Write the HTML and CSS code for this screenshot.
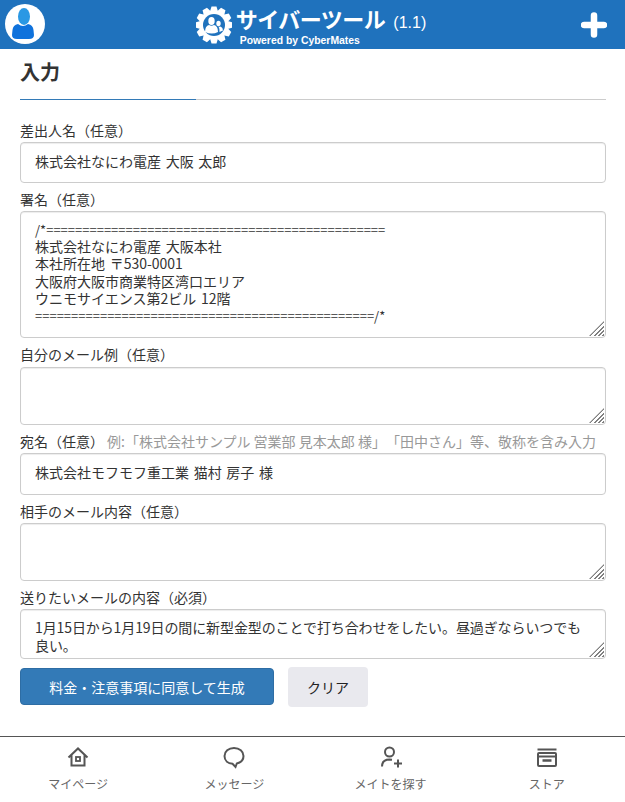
FILE: index.html
```html
<!DOCTYPE html>
<html lang="ja">
<head>
    <meta charset="UTF-8">
    <meta name="viewport" content="width=device-width, initial-scale=1.0">
    <title>サイバーツール</title>
    <link rel="stylesheet" href="styles.css">
</head>
<body>

<header class="top-bar">
    <div class="avatar">
        <svg width="40" height="40" viewBox="0 0 40 40">
            <circle cx="20" cy="20" r="20" fill="#fff"/>
            <ellipse cx="19" cy="12.500" rx="6" ry="8.500" fill="#2a98e4"/>
            <path d="M13 20 q-5 1-5.500 6 l-.5 5 q0 4 5 4 h12 q5 0 5-4 l-.5-5 q-.5-5-5.500-6 q-5 4-10 0z" fill="#0f72dc"/>
        </svg>
    </div>
    <div class="logo">
        <svg width="36" height="38" viewBox="0 0 36 38">
            <defs>
                <polygon id="tooth" points="15.500,0.500 20.500,0.500 22.500,7 13.500,7" fill="#fff"/>
            </defs>
            <use href="#tooth"/>
            <use href="#tooth" transform="rotate(30 18 19)"/>
            <use href="#tooth" transform="rotate(60 18 19)"/>
            <use href="#tooth" transform="rotate(90 18 19)"/>
            <use href="#tooth" transform="rotate(120 18 19)"/>
            <use href="#tooth" transform="rotate(150 18 19)"/>
            <use href="#tooth" transform="rotate(180 18 19)"/>
            <use href="#tooth" transform="rotate(210 18 19)"/>
            <use href="#tooth" transform="rotate(240 18 19)"/>
            <use href="#tooth" transform="rotate(270 18 19)"/>
            <use href="#tooth" transform="rotate(300 18 19)"/>
            <use href="#tooth" transform="rotate(330 18 19)"/>
            <circle cx="18" cy="19" r="14" fill="#fff"/>
            <circle cx="18" cy="19" r="11" fill="#1f72bd"/>
            <g fill="#fff">
                <ellipse cx="15.500" cy="15" rx="3.200" ry="4"/>
                <path d="M9 26 q0-6 4-7 q2.500 1.500 5 0 q4 1 4 7 q-6 3-13 0z"/>
                <ellipse cx="22.500" cy="17.500" rx="2.200" ry="2.800"/>
                <path d="M23.500 26 q0-4-1-5.500 q1 .5 2 0 q2.500 1 2.500 4z"/>
            </g>
        </svg>
        <div class="logo-text">
            <div class="logo-title">サイバーツール<span class="version">(1.1)</span></div>
            <div class="logo-sub">Powered by CyberMates</div>
        </div>
    </div>
    <svg class="plus" width="26" height="26" viewBox="0 0 26 26">
        <path d="M13 3.500 v19 M3 13 h20" stroke="#fff" stroke-width="6.500" stroke-linecap="round"/>
    </svg>
</header>

<main class="content">
    <h2 class="section-title"><span>入力</span></h2>

    <label class="field-label">差出人名（任意）</label>
    <div class="input" contenteditable="true">株式会社なにわ電産 大阪 太郎</div>

    <label class="field-label">署名（任意）</label>
    <div class="input area sign" contenteditable="true"><span class="rule">/*===============================================</span>
株式会社なにわ電産 大阪本社
本社所在地 〒530-0001
大阪府大阪市商業特区湾口エリア
ウニモサイエンス第2ビル 12階
<span class="rule">===============================================/*</span></div>

    <label class="field-label label-wide">自分のメール例（任意）</label>
    <div class="input area blank" contenteditable="true"></div>

    <label class="field-label">宛名（任意）<span class="hint">例:「株式会社サンプル 営業部 見本太郎 様」「田中さん」等、敬称を含み入力</span></label>
    <div class="input addressee" contenteditable="true">株式会社モフモフ重工業 猫村 房子 様</div>

    <label class="field-label">相手のメール内容（任意）</label>
    <div class="input area blank" contenteditable="true"></div>

    <label class="field-label">送りたいメールの内容（必須）</label>
    <div class="input area body-text" contenteditable="true">1月15日から1月19日の間に新型金型のことで打ち合わせをしたい。昼過ぎならいつでも良い。</div>

    <div class="button-row">
        <button class="button primary">料金・注意事項に同意して生成</button>
        <button class="button clear">クリア</button>
    </div>
</main>

<nav class="bottom-nav">
    <a class="nav-item">
        <svg width="24" height="24" viewBox="0 0 24 24" fill="none" stroke="#555" stroke-width="2">
            <path d="M2.500 12.500 L12 3.500 L21.500 12.500 M5.500 10 V20.500 H18.500 V10"/>
            <rect x="10" y="12" width="4" height="4" stroke-width="1.800"/>
        </svg>
        <span>マイページ</span>
    </a>
    <a class="nav-item">
        <svg width="24" height="24" viewBox="0 0 24 24" fill="none" stroke="#555" stroke-width="2">
            <path d="M12 3 C6.500 3 2.500 6.500 2.500 11 C2.500 15.500 6 18.500 10.500 18.800 L13.500 22 L14.800 18.500 C18.800 17.500 21.500 14.500 21.500 11 C21.500 6.500 17.500 3 12 3z"/>
        </svg>
        <span>メッセージ</span>
    </a>
    <a class="nav-item">
        <svg width="24" height="24" viewBox="0 0 24 24" fill="none" stroke="#555" stroke-width="2">
            <circle cx="10.500" cy="7" r="4.500"/>
            <path d="M3 21.500 C3 17 6 14.500 10.500 14.500 L13 14.700"/>
            <path d="M15 18.500 H23 M19 14.500 V22.500"/>
        </svg>
        <span>メイトを探す</span>
    </a>
    <a class="nav-item">
        <svg width="24" height="24" viewBox="0 0 24 24" fill="none" stroke="#555" stroke-width="2">
            <path d="M2.500 4.500 H21.500"/>
            <rect x="3" y="8" width="18" height="13" rx="1"/>
            <path d="M3 11.500 H21"/>
            <path d="M7.500 15.500 H16.500" stroke-width="2.500"/>
        </svg>
        <span>ストア</span>
    </a>
</nav>

</body>
</html>
```

FILE: styles.css
```css
* {
    box-sizing: border-box;
}
body {
    margin: 0;
    height: 802px;
    display: flex;
    flex-direction: column;
    overflow: hidden;
    font-family: "Noto Sans CJK JP", "Liberation Sans", sans-serif;
    font-size: 14px;
    color: #333;
    background-color: #fff;
    text-spacing-trim: space-all;
}

.top-bar {
    height: 49px;
    flex: none;
    display: flex;
    align-items: center;
    justify-content: center;
    position: relative;
    background-color: #1f72bd;
}
.avatar {
    position: absolute;
    left: 5px;
    top: 4px;
    height: 40px;
}
.plus {
    position: absolute;
    right: 18px;
    top: 12px;
}
.logo {
    display: flex;
    align-items: center;
    gap: 4px;
    margin-left: -3px;
    color: #fff;
}
.logo-text {
    display: flex;
    flex-direction: column;
}
.logo-title {
    font-size: 22px;
    font-weight: 700;
    line-height: 30px;
    letter-spacing: -.5px;
    white-space: nowrap;
}
.version {
    margin-left: 8px;
    font-size: 16px;
    font-weight: 400;
    letter-spacing: 0;
    font-family: "Liberation Sans", sans-serif;
}
.logo-sub {
    margin-top: -3px;
    margin-left: 4px;
    font-size: 10.400px;
    font-weight: 700;
    line-height: 11px;
    font-family: "Liberation Sans", sans-serif;
}

.content {
    flex: 1;
    padding: 0 19px 0 20px;
}
.section-title {
    margin: 0 0 21px;
    height: 51px;
    padding-top: 9px;
    font-size: 20px;
    line-height: 28px;
    font-weight: 700;
    border-bottom: 1px solid #ccc;
    position: relative;
}
.section-title::after {
    content: "";
    position: absolute;
    left: 0;
    bottom: -1px;
    width: 176px;
    height: 1px;
    background-color: #337ab7;
}
.field-label {
    display: block;
    height: 19px;
    line-height: 19px;
    margin-bottom: 2px;
    white-space: nowrap;
}
.label-wide {
    margin-bottom: 3px;
}
.hint {
    margin-left: 3px;
    color: #999;
}
.input {
    position: relative;
    height: 41px;
    margin-bottom: 7px;
    padding: 8px 14px;
    line-height: 20px;
    word-spacing: 1.500px;
    color: #333;
    background-color: #fff;
    border: 1px solid #ccc;
    border-radius: 4px;
    box-shadow: inset 0 1px 1px rgba(0, 0, 0, .075);
    outline: none;
}
.addressee {
    height: 42px;
}
.area {
    white-space: pre-wrap;
}
/* resize handle */
.area::after {
    content: "";
    position: absolute;
    right: 1px;
    bottom: 1px;
    width: 15px;
    height: 15px;
    background: repeating-linear-gradient(135deg, transparent 0 1.600px, #808080 1.600px 3px);
    clip-path: polygon(100% 0, 100% 100%, 0 100%);
}
.sign {
    height: 127px;
    padding-top: 9px;
    line-height: 17.200px;
}
.rule {
    font-size: 13px;
}
.blank {
    height: 58px;
}
.body-text {
    height: 50px;
    margin-bottom: 8px;
    line-height: 18px;
    letter-spacing: -.1px;
}

.button-row {
    display: flex;
    align-items: flex-start;
    gap: 14px;
}
.button {
    font: inherit;
    border-radius: 4px;
    cursor: pointer;
}
.primary {
    width: 254px;
    height: 37px;
    margin-top: 1px;
    color: #fff;
    background-color: #337ab7;
    border: 1px solid #2e6da4;
}
.clear {
    width: 80px;
    height: 40px;
    color: #222;
    background-color: #e9e9ee;
    border: none;
}

.bottom-nav {
    height: 66px;
    flex: none;
    display: grid;
    grid-template-columns: repeat(4, 1fr);
    border-top: 1px solid #555;
    background-color: #fff;
}
.nav-item {
    display: flex;
    flex-direction: column;
    align-items: center;
    padding-top: 8px;
    gap: 6px;
    font-size: 12px;
    line-height: 17px;
    color: #666;
}
```
